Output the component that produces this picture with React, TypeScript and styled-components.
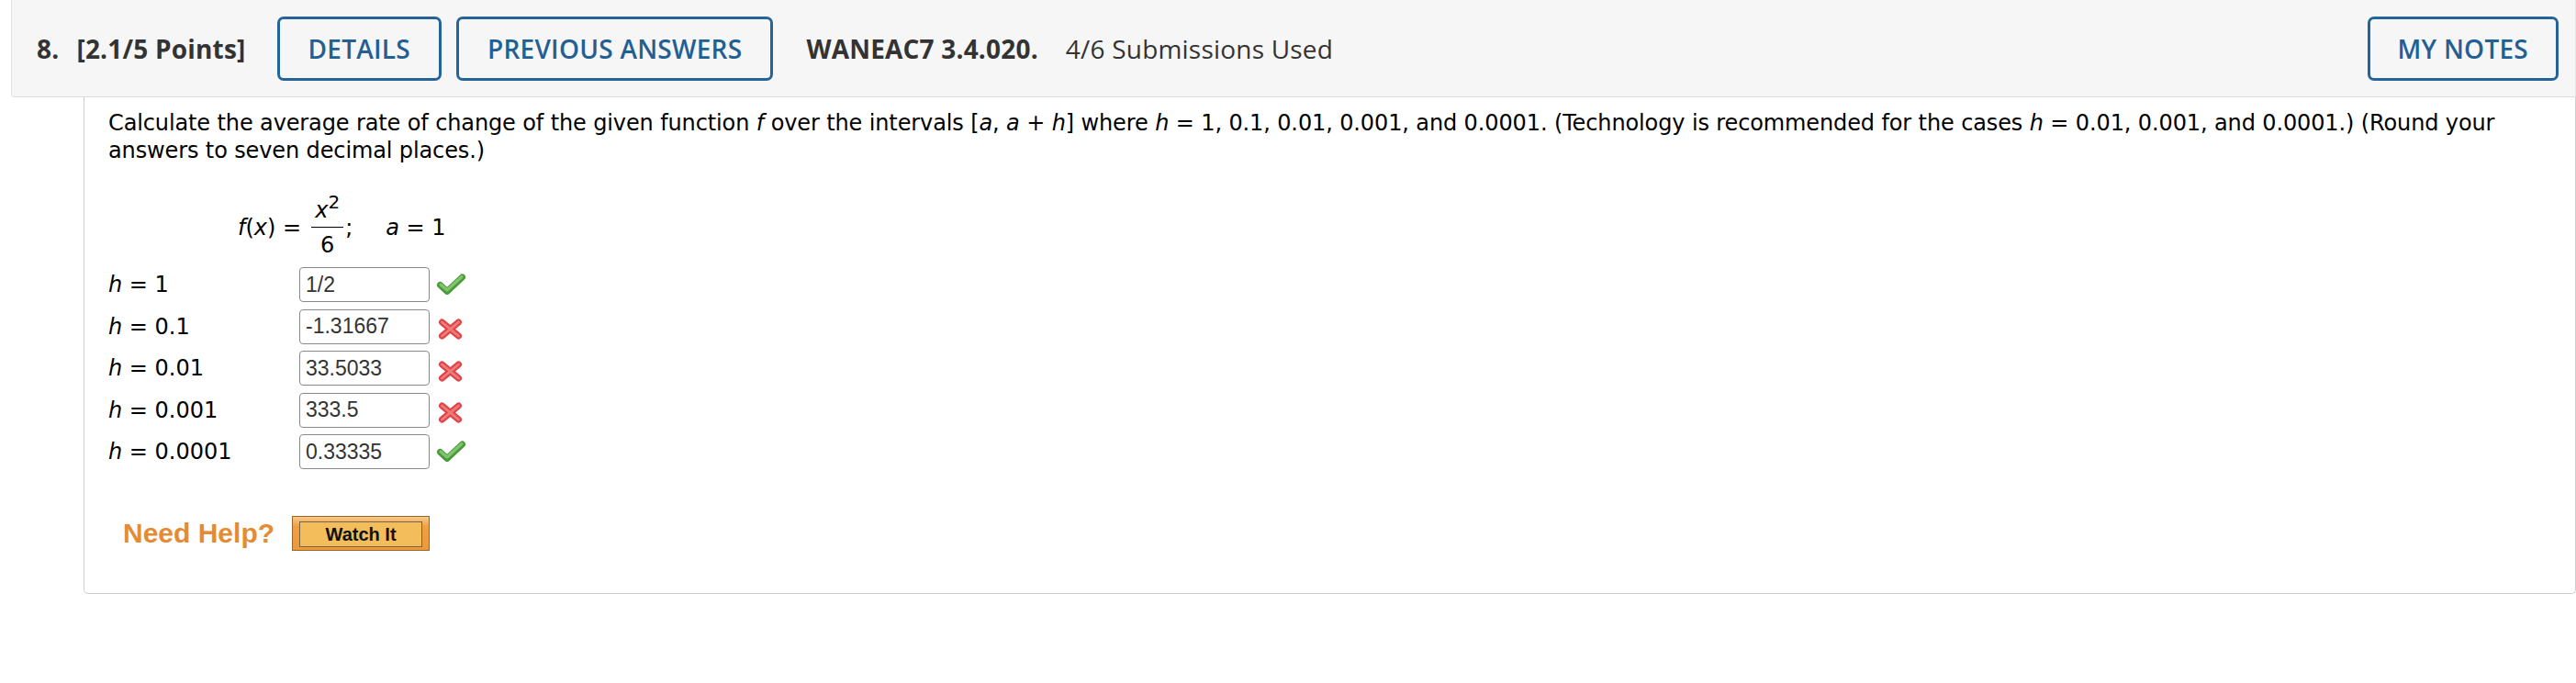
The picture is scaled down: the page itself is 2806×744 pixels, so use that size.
import React from 'react';
import styled, { createGlobalStyle } from 'styled-components';

const GlobalStyle = createGlobalStyle`
  html, body {
    margin: 0;
    padding: 0;
    background: #ffffff;
  }
  body {
    font-family: "DejaVu Sans", Verdana, sans-serif;
    color: #000;
  }
`

const Page = styled.div`
  width: 2806px;
  padding-left: 12px;
  box-sizing: border-box;
`

const Header = styled.div`
  display: flex;
  align-items: center;
  height: 106px;
  box-sizing: border-box;
  padding: 0 18px 0 27px;
  background: #f6f6f6;
  border: 1px solid #e2e2e2;
  border-top: none;
  border-bottom-color: #dcdcdc;
  border-radius: 0 0 0 4px;
  font-family: "Open Sans", "Noto Sans", sans-serif;
  font-size: 28px;
  color: #333;
`

const Num = styled.span`
  font-weight: 700;
  margin-right: 19px;
  letter-spacing: 0.2px;
`

const Points = styled.span`
  font-weight: 700;
  margin-right: 34px;
  letter-spacing: 0.2px;
`

const HeadButton = styled.button`
  height: 70px;
  box-sizing: border-box;
  padding: 0 ${({ wide }) => (wide ? '30px' : '31px')};
  margin-right: ${({ gap }) => gap}px;
  background: transparent;
  border: 3px solid #25649a;
  border-radius: 7px;
  color: #245f94;
  font-family: "Open Sans", "Noto Sans", sans-serif;
  font-size: 28px;
  font-weight: 600;
  letter-spacing: 0.25px;
  cursor: pointer;
`

const Code = styled.span`
  font-weight: 700;
  margin-right: 30px;
  letter-spacing: 0.2px;
`

const Used = styled.span`
  font-weight: 400;
  letter-spacing: 0.2px;
`

const Spacer = styled.div`
  flex: 1;
`

const Panel = styled.div`
  margin-left: 79px;
  border: 1px solid #cccccc;
  border-top: none;
  border-radius: 0 0 5px 5px;
  padding: 13px 20px 46px 26px;
  min-height: 540px;
  box-sizing: border-box;
`

const Question = styled.p`
  margin: 0;
  font-size: 24px;
  line-height: 30px;
  letter-spacing: -0.12px;
  color: #000;
`

const Formula = styled.div`
  display: flex;
  align-items: center;
  margin-top: 37px;
  padding-left: 141px;
  font-size: 24px;
  line-height: 30px;
`

const Fraction = styled.span`
  display: inline-flex;
  flex-direction: column;
  align-items: center;
  margin: 0 2px 0 11px;
`

const Numer = styled.span`
  line-height: 26px;
  padding: 0 2px 5px;
  border-bottom: 1px solid #000;
  min-width: 31px;
  text-align: center;
`

const Denom = styled.span`
  line-height: 26px;
  padding-top: 6px;
`

const Sup = styled.sup`
  font-size: 20px;
  line-height: 0;
  vertical-align: 10px;
`

const AValue = styled.span`
  margin-left: 36px;
`

const Rows = styled.div`
  display: flex;
  flex-direction: column;
  gap: 7.5px;
  margin-top: 11px;
`

const Row = styled.div`
  display: flex;
  align-items: center;
  height: 38px;
`

const Label = styled.span`
  width: 208px;
  font-size: 24px;
  line-height: 38px;
`

const Answer = styled.input`
  width: 142px;
  height: 38px;
  box-sizing: border-box;
  border: 1px solid #8a8a8a;
  border-radius: 4px;
  padding: 0 6px;
  font-family: "Liberation Sans", Arial, sans-serif;
  font-size: 23px;
  color: #333;
  background: #fff;
  outline: none;
`

const Mark = styled.span`
  display: inline-flex;
  margin-left: ${({ ok }) => (ok ? '8px' : '9px')};
  margin-top: ${({ ok }) => (ok ? '-2px' : '6px')};
`

const Help = styled.div`
  display: flex;
  align-items: center;
  margin-top: 51px;
  padding-left: 16px;
`

const HelpText = styled.span`
  font-family: "Liberation Sans", Arial, sans-serif;
  font-weight: 700;
  font-size: 30px;
  color: #e58b35;
  margin-right: 19px;
`

const WatchButton = styled.button`
  width: 150px;
  height: 38px;
  box-sizing: border-box;
  padding: 5px 7px;
  border: 1px solid #9c6425;
  background: linear-gradient(#f7c98c, #eea043 30%, #ec9a3a);
  cursor: pointer;
`

const WatchInner = styled.span`
  display: flex;
  align-items: center;
  justify-content: center;
  height: 100%;
  border: 1px solid #7d6440;
  background: #f3bd5c;
  font-family: "Liberation Sans", Arial, sans-serif;
  font-weight: 700;
  font-size: 20px;
  color: #111;
`

const Check = () => (
  <svg width="31" height="23" viewBox="0 0 31 23">
    <path d="M3.5 12.5 L11 19.5 L27.5 4" fill="none" stroke="#4a9a3c" strokeWidth="7" strokeLinecap="round" strokeLinejoin="round" />
    <path d="M4 12 L11 18 L27 3.5" fill="none" stroke="#7fc56c" strokeWidth="3.2" strokeLinecap="round" strokeLinejoin="round" />
  </svg>
)

const Cross = () => (
  <svg width="27" height="23" viewBox="0 0 27 23">
    <path d="M4.5 4 L22.5 19 M22.5 4 L4.5 19" fill="none" stroke="#df4548" strokeWidth="7" strokeLinecap="round" />
    <path d="M4.5 4 L22.5 19 M22.5 4 L4.5 19" fill="none" stroke="#f17b7b" strokeWidth="2.8" strokeLinecap="round" />
  </svg>
)

const answers = [
  { h: '1', value: '1/2', ok: true },
  { h: '0.1', value: '-1.31667', ok: false },
  { h: '0.01', value: '33.5033', ok: false },
  { h: '0.001', value: '333.5', ok: false },
  { h: '0.0001', value: '0.33335', ok: true },
];

const App = () => {
  return (
    <Page>
      <GlobalStyle />
      <Header>
        <Num>8.</Num>
        <Points>[2.1/5 Points]</Points>
        <HeadButton gap={16}>DETAILS</HeadButton>
        <HeadButton gap={36}>PREVIOUS ANSWERS</HeadButton>
        <Code>WANEAC7 3.4.020.</Code>
        <Used>4/6 Submissions Used</Used>
        <Spacer />
        <HeadButton wide gap={0}>MY NOTES</HeadButton>
      </Header>
      <Panel>
        <Question>
          Calculate the average rate of change of the given function <i>f</i> over the intervals [<i>a</i>, <i>a</i> + <i>h</i>] where <i>h</i> = 1, 0.1, 0.01, 0.001, and 0.0001. (Technology is recommended for the cases <i>h</i> = 0.01, 0.001, and 0.0001.) (Round your answers to seven decimal places.)
        </Question>
        <Formula>
          <span><i>f</i>(<i>x</i>) =</span>
          <Fraction>
            <Numer><i>x</i><Sup>2</Sup></Numer>
            <Denom>6</Denom>
          </Fraction>
          <span>;</span>
          <AValue><i>a</i> = 1</AValue>
        </Formula>
        <Rows>
          {answers.map((a) => (
            <Row key={a.h}>
              <Label><i>h</i> = {a.h}</Label>
              <Answer readOnly defaultValue={a.value} />
              <Mark ok={a.ok}>{a.ok ? <Check /> : <Cross />}</Mark>
            </Row>
          ))}
        </Rows>
        <Help>
          <HelpText>Need Help?</HelpText>
          <WatchButton>
            <WatchInner>Watch It</WatchInner>
          </WatchButton>
        </Help>
      </Panel>
    </Page>
  );
}

export default App
